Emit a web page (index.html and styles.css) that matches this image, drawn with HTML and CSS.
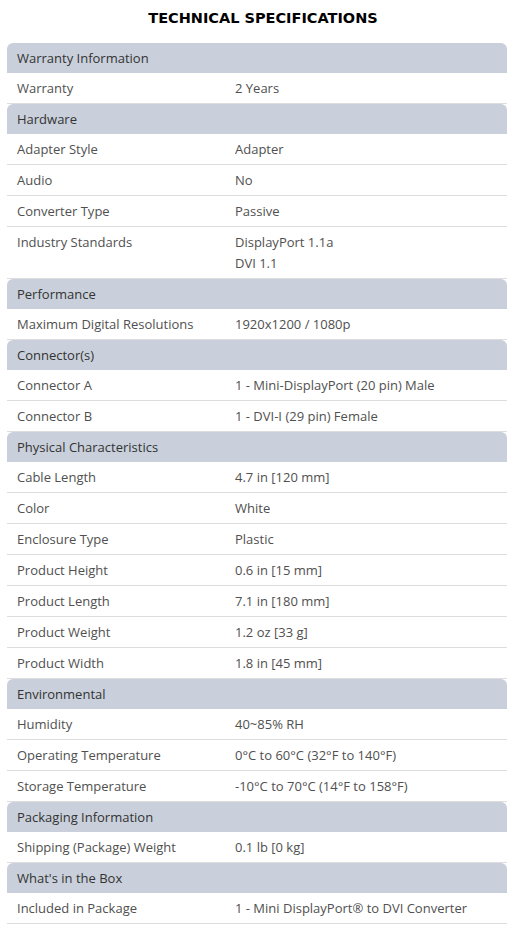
FILE: index.html
```html
<!DOCTYPE html>
<html lang="en">
<head>
<meta charset="utf-8">
<title>Technical Specifications</title>
<link rel="stylesheet" href="styles.css">
</head>
<body>
<div class="specs">
  <h2 class="title">TECHNICAL SPECIFICATIONS</h2>

  <div class="group">
    <div class="group-head">Warranty Information</div>
    <div class="row"><div class="label">Warranty</div><div class="value">2 Years</div></div>
  </div>

  <div class="group">
    <div class="group-head">Hardware</div>
    <div class="row"><div class="label">Adapter Style</div><div class="value">Adapter</div></div>
    <div class="row"><div class="label">Audio</div><div class="value">No</div></div>
    <div class="row"><div class="label">Converter Type</div><div class="value">Passive</div></div>
    <div class="row"><div class="label">Industry Standards</div><div class="value">DisplayPort 1.1a<br>DVI 1.1</div></div>
  </div>

  <div class="group">
    <div class="group-head">Performance</div>
    <div class="row"><div class="label">Maximum Digital Resolutions</div><div class="value">1920x1200 / 1080p</div></div>
  </div>

  <div class="group">
    <div class="group-head">Connector(s)</div>
    <div class="row"><div class="label">Connector A</div><div class="value">1 - Mini-DisplayPort (20 pin) Male</div></div>
    <div class="row"><div class="label">Connector B</div><div class="value">1 - DVI-I (29 pin) Female</div></div>
  </div>

  <div class="group">
    <div class="group-head">Physical Characteristics</div>
    <div class="row"><div class="label">Cable Length</div><div class="value">4.7 in [120 mm]</div></div>
    <div class="row"><div class="label">Color</div><div class="value">White</div></div>
    <div class="row"><div class="label">Enclosure Type</div><div class="value">Plastic</div></div>
    <div class="row"><div class="label">Product Height</div><div class="value">0.6 in [15 mm]</div></div>
    <div class="row"><div class="label">Product Length</div><div class="value">7.1 in [180 mm]</div></div>
    <div class="row"><div class="label">Product Weight</div><div class="value">1.2 oz [33 g]</div></div>
    <div class="row"><div class="label">Product Width</div><div class="value">1.8 in [45 mm]</div></div>
  </div>

  <div class="group">
    <div class="group-head">Environmental</div>
    <div class="row"><div class="label">Humidity</div><div class="value">40~85% RH</div></div>
    <div class="row"><div class="label">Operating Temperature</div><div class="value">0°C to 60°C (32°F to 140°F)</div></div>
    <div class="row"><div class="label">Storage Temperature</div><div class="value">-10°C to 70°C (14°F to 158°F)</div></div>
  </div>

  <div class="group">
    <div class="group-head">Packaging Information</div>
    <div class="row"><div class="label">Shipping (Package) Weight</div><div class="value">0.1 lb [0 kg]</div></div>
  </div>

  <div class="group">
    <div class="group-head">What's in the Box</div>
    <div class="row"><div class="label">Included in Package</div><div class="value">1 - Mini DisplayPort® to DVI Converter</div></div>
  </div>
</div>
</body>
</html>
```

FILE: styles.css
```css
html, body {
  margin: 0;
  padding: 0;
  background: #ffffff;
}

.specs {
  width: 500px;
  margin-left: 7px;
  font-family: "Open Sans", "Liberation Sans", sans-serif;
  font-size: 13px;
  color: #505050;
}

.title {
  margin: 0;
  padding: 10px 0 16px 12px;
  font-family: "DejaVu Sans", Verdana, sans-serif;
  font-weight: bold;
  font-size: 14.5px;
  line-height: 17px;
  text-align: center;
  color: #000000;
}

.group-head {
  background: #c9d0db;
  border-radius: 6px 6px 0 0;
  padding: 5px 10px 4px;
  line-height: 21px;
  color: #333333;
}

.row {
  display: grid;
  grid-template-columns: 228px 1fr;
  border-bottom: 1px solid #dddddd;
  line-height: 21px;
}

.label {
  padding: 5px 10px 4px;
}

.value {
  padding: 5px 10px 4px 0;
}

.multi .label,
.multi .value {
  padding-bottom: 3px;
}
```
